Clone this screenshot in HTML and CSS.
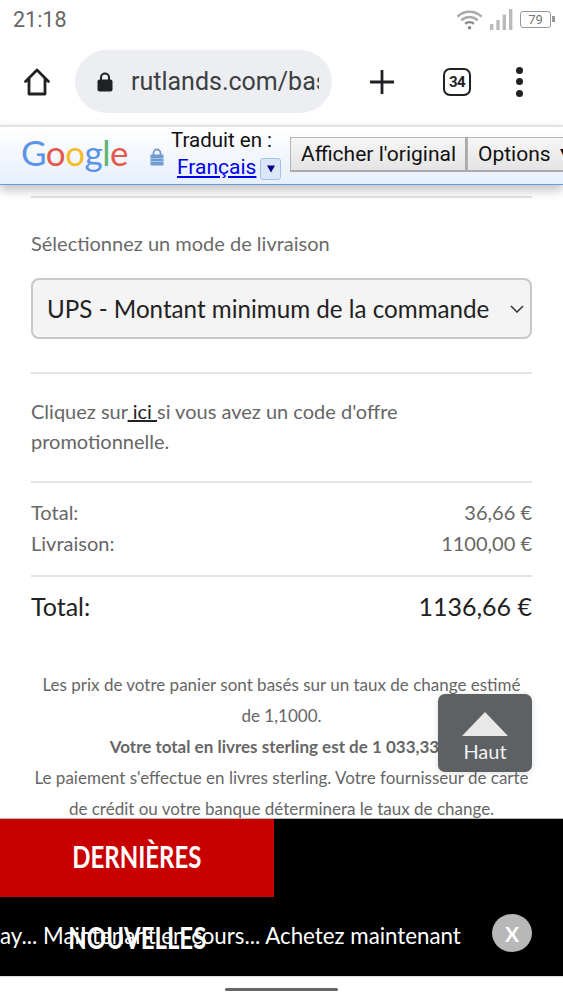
FILE: index.html
```html
<!DOCTYPE html>
<html lang="fr">
<head>
<meta charset="utf-8">
<title>Rutlands</title>
<link rel="stylesheet" href="styles.css">
</head>
<body>
<div class="phone">
  <div class="status">
    <span class="clock">21:18</span>
    <div class="status-icons">
      <svg class="wifi" width="27" height="22" viewBox="0 0 28 22"><path d="M1.500 8.500 A18 18 0 0 1 26.500 8.500" fill="none" stroke="#aaa" stroke-width="2.600"/><path d="M5.500 12.500 A12 12 0 0 1 22.500 12.500" fill="none" stroke="#aaa" stroke-width="2.600"/><path d="M9.500 16 A7 7 0 0 1 18.500 16" fill="none" stroke="#888" stroke-width="2.600"/><circle cx="14" cy="20" r="1.800" fill="#888"/></svg>
      <svg class="signal" width="23" height="21" viewBox="0 0 23 21"><rect x="0" y="15" width="3.400" height="6" fill="#bbb"/><rect x="6.300" y="11" width="3.400" height="10" fill="#bbb"/><rect x="12.600" y="5.500" width="3.400" height="15.500" fill="#bbb"/><rect x="19" y="0" width="3.400" height="21" fill="#bbb"/></svg>
      <div class="battery"><span>79</span></div>
    </div>
  </div>

  <div class="toolbar">
    <svg class="home" width="28" height="30" viewBox="0 0 28 30"><path d="M2.500 14.500 L14 3 L25.500 14.500 M6 12 V27 H22 V12" fill="none" stroke="#202124" stroke-width="2.800" stroke-linejoin="round" stroke-linecap="round"/></svg>
    <div class="omnibox">
      <svg class="lock" width="16" height="20" viewBox="0 0 16 20"><path d="M4 9 V5.500 A4 4 0 0 1 12 5.500 V9" fill="none" stroke="#202124" stroke-width="2"/><rect x="0.500" y="7.500" width="15" height="12" rx="2" fill="#202124"/></svg>
      <span class="url">rutlands.com/basket</span>
    </div>
    <svg class="plus" width="26" height="26" viewBox="0 0 26 26"><path d="M13 1 V25 M1 13 H25" stroke="#202124" stroke-width="2.800"/></svg>
    <div class="tabs">34</div>
    <div class="dots"><i></i><i></i><i></i></div>
  </div>

  <div class="gbar">
    <span class="glogo"><b class="b">G</b><b class="r">o</b><b class="y">o</b><b class="b">g</b><b class="g">l</b><b class="r">e</b></span>
    <svg class="glock" width="14" height="18" viewBox="0 0 14 18"><path d="M3.500 8 V5 A3.500 3.500 0 0 1 10.500 5 V8" fill="none" stroke="#6f9bd1" stroke-width="1.800"/><rect x="0.500" y="6.500" width="13" height="11" rx="1" fill="#6f9bd1"/><path d="M1 10.500 H13 M1 13.500 H13" stroke="#a9c5e6" stroke-width="1"/></svg>
    <div class="gtrans">
      <div>Traduit en :</div>
      <div class="glang"><a href="#">Français</a><span class="gdrop"><svg width="8" height="8" viewBox="0 0 8 7"><path d="M0 0 H8 L4 7 Z" fill="#00008b"/></svg></span></div>
    </div>
    <button class="gbtn gorig" type="button">Afficher l'original</button>
    <button class="gbtn gopt" type="button">Options ▼</button>
  </div>

  <div class="content">
    <hr class="rule first">
    <p class="label">Sélectionnez un mode de livraison</p>
    <div class="select">
      <span>UPS - Montant minimum de la commande</span>
      <svg width="14" height="8" viewBox="0 0 14 8"><path d="M1 1 L7 7 L13 1" fill="none" stroke="#333" stroke-width="1.500"/></svg>
    </div>
    <hr class="rule r2">
    <p class="promo">Cliquez sur<a href="#"> ici </a>si vous avez un code d'offre promotionnelle.</p>
    <hr class="rule r3">
    <div class="row"><span>Total:</span><span>36,66 €</span></div>
    <div class="row"><span>Livraison:</span><span>1100,00 €</span></div>
    <hr class="rule r4">
    <div class="row grand"><span>Total:</span><span>1136,66 €</span></div>
    <div class="note">
      <p>Les prix de votre panier sont basés sur un taux de change estimé de 1,1000.</p>
      <p><strong>Votre total en livres sterling est de 1 033,33 £</strong></p>
      <p>Le paiement s'effectue en livres sterling. Votre fournisseur de carte de crédit ou votre banque déterminera le taux de change.</p>
    </div>
  </div>

  <div class="haut">
    <svg width="46" height="24" viewBox="0 0 46 24"><path d="M23 0 L46 24 H0 Z" fill="#e8e8e8"/></svg>
    <span>Haut</span>
  </div>

  <div class="news">
    <div class="news-top"><div class="news-tab"><span class="squeeze">DERNIÈRES</span></div></div>
    <div class="news-bottom">
      <div class="ticker"><span>ay... Maintenant en cours... Achetez maintenant</span></div>
      <div class="news-word"><span class="squeeze">NOUVELLES</span></div>
      <div class="close">X</div>
    </div>
  </div>

  <div class="navbar"><i></i></div>
</div>
</body>
</html>
```

FILE: styles.css
```css
* { box-sizing: border-box; }
html, body { margin: 0; padding: 0; background: #fff; }
body { font-family: "Lato", "Noto Sans", sans-serif; }
.phone { position: relative; width: 563px; height: 1000px; overflow: hidden; background: #fff; display: flex; flex-direction: column; }

.status { height: 38px; flex: none; display: flex; justify-content: space-between; align-items: center; padding: 0 12px 0 13px; }
.clock { font: 21.500px "Roboto", sans-serif; color: #666; }
.status-icons { display: flex; align-items: center; gap: 7px; }
.status-icons svg { flex: none; }
.battery { position: relative; width: 31px; height: 17px; border: 1.500px solid #999; border-radius: 3px; display: flex; align-items: center; justify-content: center; font: 13px "Roboto", sans-serif; color: #777; }
.battery::after { content: ""; position: absolute; right: -5px; top: 4px; width: 3px; height: 6px; background: #999; }

.toolbar { height: 87px; flex: none; display: flex; align-items: center; padding: 0 0 0 23px; }
.toolbar svg { flex: none; }
.omnibox { margin-left: 24px; width: 257px; height: 63px; background: #eceef1; border-radius: 32px; display: flex; align-items: center; padding-left: 22px; overflow: hidden; }
.url { margin-left: 18px; width: 188px; flex: none; overflow: hidden; white-space: nowrap; font: 25px "Roboto", sans-serif; color: #3c4043; }
.plus { margin-left: 37px; }
.tabs { margin-left: 48px; width: 28px; height: 28px; border: 2.800px solid #202124; border-radius: 7px; display: flex; align-items: center; justify-content: center; font: 700 15px "Roboto", sans-serif; letter-spacing: -.5px; color: #202124; }
.dots { margin-left: 45px; display: flex; flex-direction: column; gap: 4.500px; }
.dots i { width: 7px; height: 7px; border-radius: 50%; background: #202124; }

.gbar { height: 60px; flex: none; position: relative; z-index: 2; display: flex; align-items: center; border-top: 2px solid #e2e2e2; border-bottom: 1px solid #6b97dd; background: linear-gradient(#fff, #e6effb); box-shadow: 0 5px 10px rgba(0,0,0,.25); font-family: "Roboto", sans-serif; padding-left: 21px; overflow: hidden; white-space: nowrap; }
.glogo { flex: none; width: 106px; font: 400 35px "Lato", sans-serif; letter-spacing: -.5px; line-height: 44px; margin-top: -7px; }
.glogo b { font-weight: 400; }
.b { color: #5a94e8; } .r { color: #e5584c; } .y { color: #f5be2b; } .g { color: #5cb46e; }
.glock { flex: none; margin-left: 23px; margin-top: 2px; }
.gtrans { flex: none; margin-left: 7px; width: 119px; font-size: 20.500px; color: #111; line-height: 27px; margin-top: -3px; }
.glang { display: flex; align-items: center; margin-left: 6px; gap: 4px; }
.glang a { color: #0000ee; text-decoration: underline; font-size: 21px; }
.gdrop { flex: none; width: 21px; height: 22px; margin-top: 3px; border: 1.500px solid #a7c0e6; background: #dbe7f7; border-radius: 3px; display: flex; align-items: center; justify-content: center; }
.gbtn { flex: none; height: 35px; padding: 0 10px; background: linear-gradient(#f6f6f6, #e4e4e4); border: 1px solid #b5b5b5; border-bottom: 2px solid #aaa; border-right: 2px solid #aaa; font: 21px "Roboto", sans-serif; color: #111; margin-top: -3px; white-space: nowrap; }
.gorig { width: 177px; }
.gopt { width: 110px; text-align: left; }

.content { flex: 1; padding: 0 31px; color: #666; font-size: 20px; }
.rule { border: 0; border-top: 2px solid #e3e3e3; margin: 0; }
.rule.first { margin-top: 11px; }
.label { margin: 32px 0 0; line-height: 26px; color: #6a6a6a; }
.select { margin-top: 22px; height: 61px; background: #f4f4f4; border: 2px solid #c8c8c8; border-radius: 8px; display: flex; align-items: center; justify-content: space-between; padding: 0 6px 0 14px; color: #222; font-size: 24.200px; white-space: nowrap; }
.rule.r2 { margin-top: 33px; }
.promo { margin: 22px 0 0; line-height: 30px; }
.promo a { color: #222; text-decoration: underline; }
.rule.r3 { margin-top: 25px; }
.row { display: flex; justify-content: space-between; line-height: 31px; }
.rule.r3 + .row { margin-top: 14px; }
.rule.r4 { margin-top: 16px; }
.grand { margin-top: 14px; color: #222; font-size: 25px; }
.note { margin-top: 47px; padding: 0 3px; text-align: center; font-size: 17px; line-height: 31px; }
.note p { margin: 0; }
.note strong { font-weight: 700; }

.haut { position: absolute; left: 438px; top: 694px; width: 94px; height: 78px; background: #5d6163; border-radius: 7px; display: flex; flex-direction: column; align-items: center; padding-top: 18px; color: #f2f2f2; font-size: 20px; box-shadow: 0 1px 6px rgba(0,0,0,.15); }
.haut span { line-height: 30px; }

.news { position: absolute; left: 0; top: 819px; width: 563px; height: 157px; background: #000; display: flex; flex-direction: column; box-shadow: 0 -1px 0 #bbb; }
.news-top { height: 78px; flex: none; }
.news-tab { width: 274px; height: 78px; padding-bottom: 4px; background: #c90000; color: #fff; display: flex; align-items: center; justify-content: center; font: 700 30px "Lato", sans-serif; }
.squeeze { display: inline-block; transform: scaleX(.8); }
.news-bottom { position: relative; flex: 1; }
.ticker { position: absolute; left: 0; top: 23px; width: 462px; overflow: hidden; white-space: nowrap; color: #fff; font-size: 22.300px; line-height: 32px; }
.news-word { position: absolute; left: 0; top: 21px; width: 274px; text-align: center; color: #fff; font: 700 30px "Lato", sans-serif; line-height: 38px; }
.close { position: absolute; left: 492px; top: 17px; width: 40px; height: 38px; border-radius: 50%; background: #b8b8b8; color: #fff; font-weight: 700; font-size: 21px; display: flex; align-items: center; justify-content: center; }

.navbar { position: absolute; left: 0; top: 976px; width: 563px; height: 24px; background: #fff; border-top: 1px solid #ddd; display: flex; justify-content: center; padding-top: 11px; }
.navbar i { width: 113px; height: 3px; border-radius: 2px; background: #666; }
```
